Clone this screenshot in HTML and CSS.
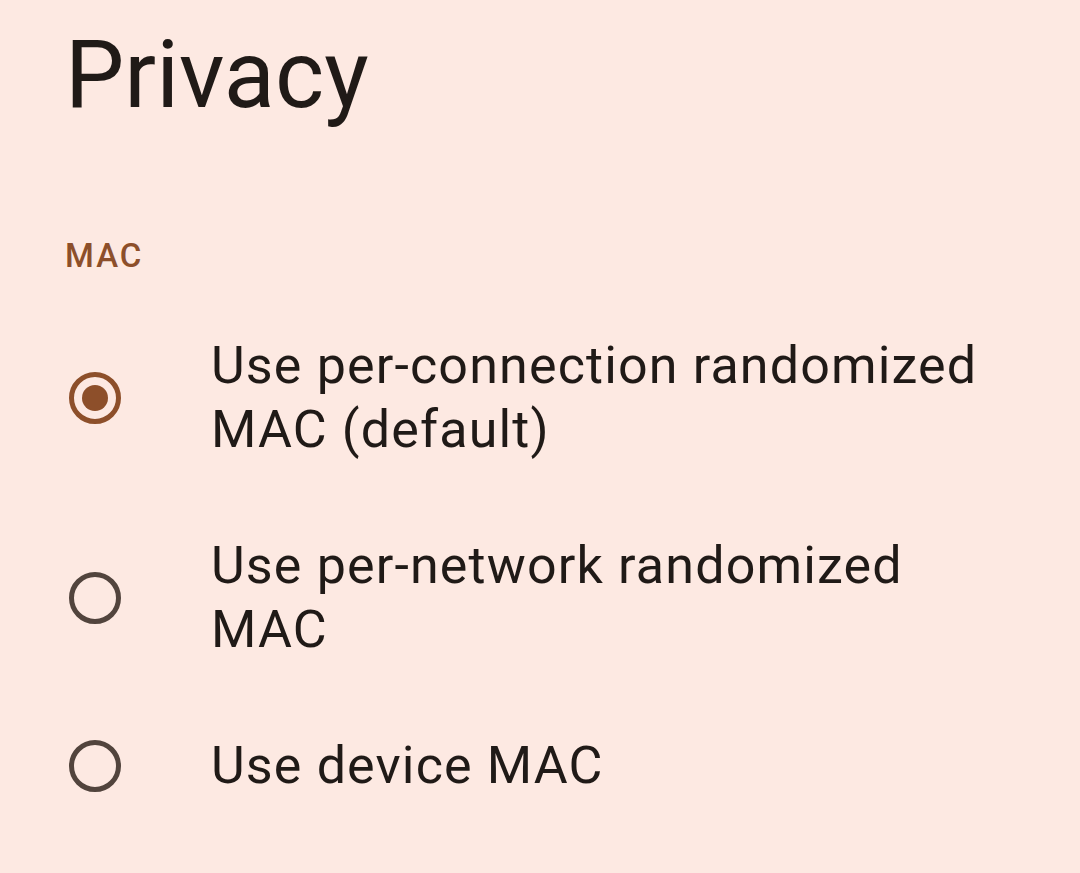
FILE: index.html
```html
<!DOCTYPE html>
<html lang="en">
  <head>
    <meta charset="UTF-8" />
    <meta name="viewport" content="width=device-width, initial-scale=1" />
    <title>Privacy</title>
    <link rel="stylesheet" href="styles.css">
  </head>
  <body>
    <div class="page">
      <h1 class="title">Privacy</h1>
      <div class="section-label">MAC</div>
      <div class="options" role="radiogroup" aria-label="MAC">
        <label class="option">
          <span class="radio checked"></span>
          <span class="option-text">Use per-connection randomized MAC (default)</span>
        </label>
        <label class="option">
          <span class="radio"></span>
          <span class="option-text">Use per-network randomized MAC</span>
        </label>
        <label class="option">
          <span class="radio"></span>
          <span class="option-text">Use device MAC</span>
        </label>
      </div>
    </div>
  </body>
</html>
```

FILE: styles.css
```css
* {
  box-sizing: border-box;
}
html,
body {
  margin: 0;
  background: #fde9e2;
}
body {
  font-family: Roboto, "Noto Sans", sans-serif;
  color: #201a17;
  min-height: 100vh;
}
.page {
  padding: 20px 0 0 0;
}
.title {
  margin: 0 0 0 65px;
  font-size: 94px;
  line-height: 110px;
  font-weight: 400;
}
.section-label {
  margin: 106px 0 0 65px;
  font-size: 33px;
  line-height: 40px;
  font-weight: 500;
  letter-spacing: 2px;
  color: #8d4f2a;
}
.options {
  margin-top: 22px;
  display: flex;
  flex-direction: column;
}
.option {
  display: grid;
  grid-template-columns: 52px 1fr;
  column-gap: 90px;
  align-items: center;
  padding: 36px 60px 36px 69px;
  cursor: pointer;
}
.radio {
  width: 52px;
  height: 52px;
  border-radius: 50%;
  border: 5px solid #52443d;
  display: flex;
  align-items: center;
  justify-content: center;
}
.radio.checked {
  border-color: #8d4f2a;
}
.radio.checked::after {
  content: "";
  width: 26px;
  height: 26px;
  border-radius: 50%;
  background: #8d4f2a;
}
.option-text {
  font-size: 52px;
  line-height: 64px;
  letter-spacing: 1.15px;
}
```
